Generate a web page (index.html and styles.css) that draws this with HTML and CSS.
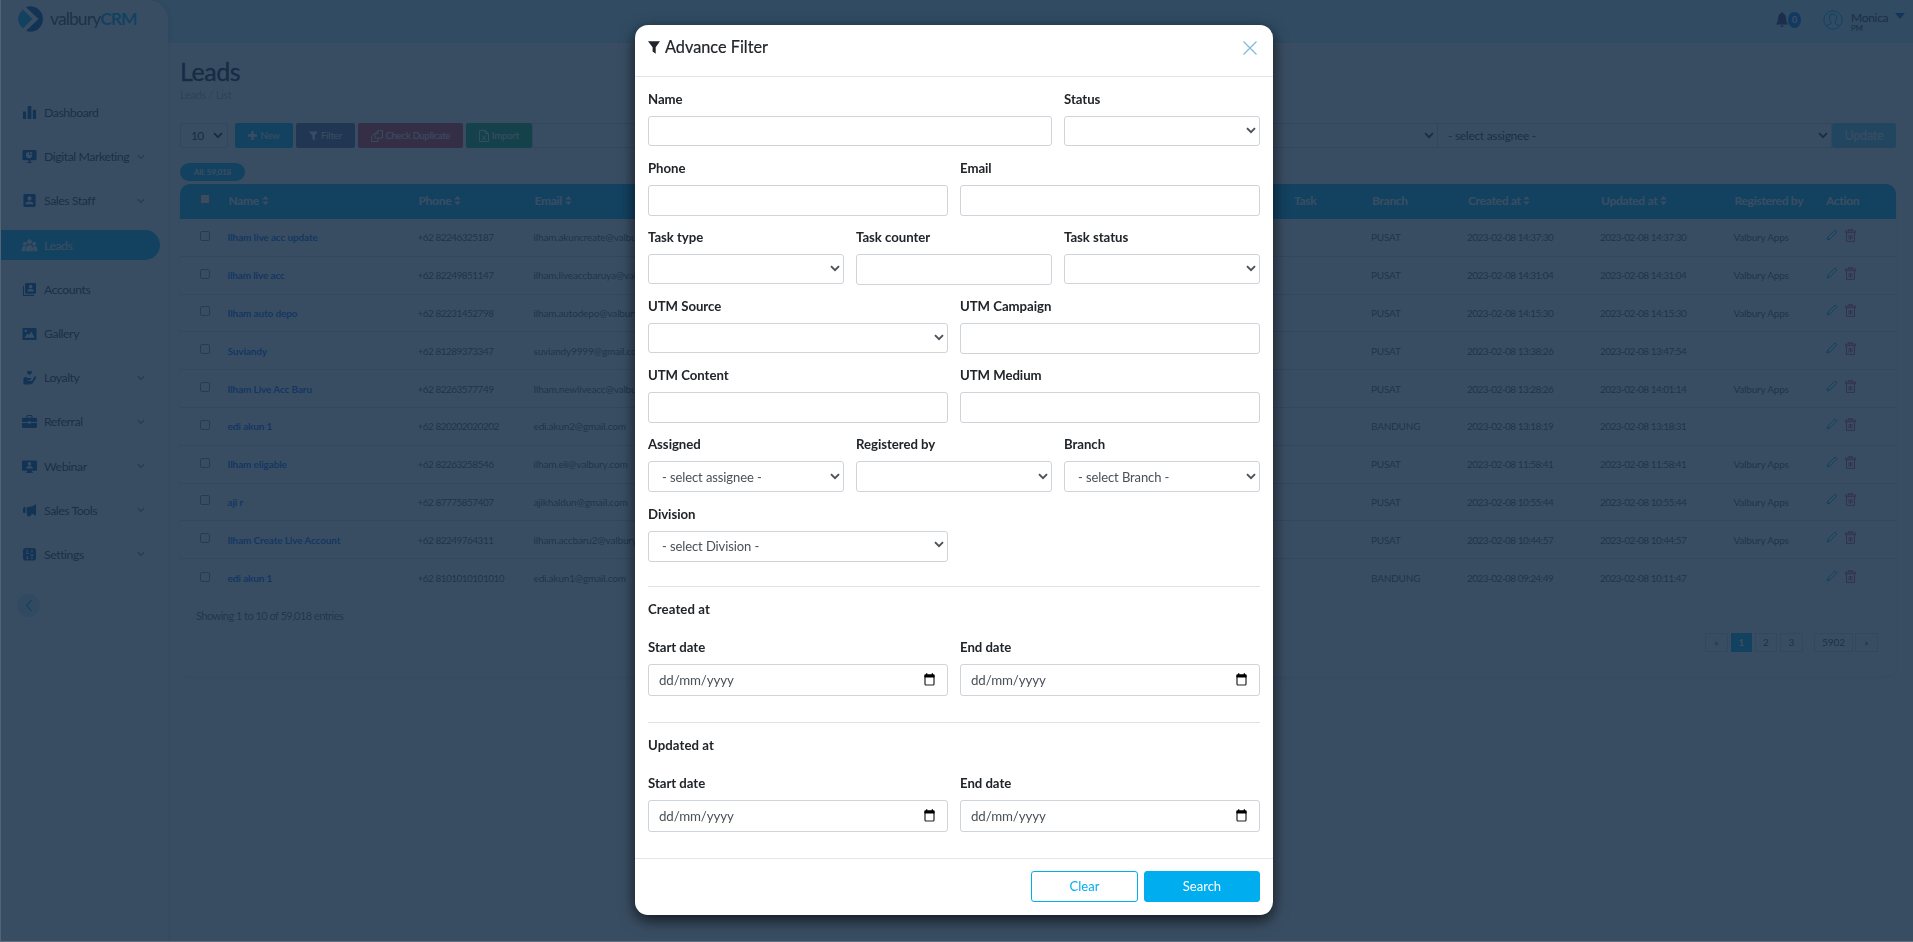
FILE: index.html
```
<!DOCTYPE html>
<html lang="en">
<head>
<meta charset="utf-8">
<title>Leads - valburyCRM</title>
<link rel="stylesheet" href="styles.css">
</head>
<body>
<svg class="sprite" xmlns="http://www.w3.org/2000/svg">
  <symbol id="chev" viewBox="0 0 10 7"><path d="M1 1.2 5 5.2 9 1.2" fill="none" stroke="currentColor" stroke-width="1.9"/></symbol>
  <symbol id="funnel" viewBox="0 0 12 13"><path d="M0 .3h12L7.700 6.200V12.700L4.600 10.600V6.200z" fill="currentColor"/></symbol>
  <symbol id="sort" viewBox="0 0 7 10"><path d="M3.500 0 7 4H0zM3.500 10 0 6h7z" fill="currentColor"/></symbol>
  <symbol id="pencil" viewBox="0 0 12 12"><path d="M1 11 1.800 8.200 9 1 11 2.800 3.800 10.200zM1.800 8.200 3.800 10.200" fill="none" stroke="#00aeef" stroke-width="1"/></symbol>
  <symbol id="trash" viewBox="0 0 11 13"><path d="M3.500 2V.7h4V2M.5 2h10v1.700H.500zM1.500 4v8.400h8V4M4 6v4.500M5.500 6v4.500M7 6v4.500" fill="none" stroke="#c83560" stroke-width=".9"/></symbol>
  <symbol id="cal" viewBox="0 0 11 13"><path d="M1 3.200h9V11a1 1 0 0 1-1 1H2a1 1 0 0 1-1-1z" fill="none" stroke="#222" stroke-width="1.200"/><path d="M.4 4.600V2.200q0-.9.9-.9H2V.2h1.300v1.100h4.400V.2H9v1.100h.7q.9 0 .9.900v2.400z" fill="#000"/></symbol>
</svg>

<div class="app">
  <aside class="sidebar">
    <div class="brand">
      <svg width="25" height="26" viewBox="0 0 25 26"><path d="M5 3.500 14.500 13 5 22.500Q0 18 0 13T5 3.500z" fill="#00aeef"/><path d="M8 1.300Q10 .3 12.500.3A12.500 12.700 0 0 1 12.500 25.700Q10 25.700 8 24.700L20.500 13z" fill="#0054a6"/></svg>
      <span class="brand-name">valbury<b>CRM</b></span>
    </div>
    <nav class="menu">
      <a><svg class="ic" viewBox="0 0 16 16"><path d="M1 7h3.500v8H1zM6 1h4v14H6zM11.500 5H15v10h-3.500z"/></svg>Dashboard</a>
      <a><svg class="ic" viewBox="0 0 16 16"><path fill-rule="evenodd" d="M1.500 1h13q1 0 1 1v9q0 1-1 1H9v2h2v1H5v-1h2v-2H1.500q-1 0-1-1V2q0-1 1-1zM7.500 3.200a3.300 3.300 0 1 0 3.300 3.300H7.500zM8.500 2.800v2.800h2.800a3 3 0 0 0-2.800-2.800z"/></svg>Digital Marketing<svg class="arr"><use href="#chev"/></svg></a>
      <a><svg class="ic" viewBox="0 0 16 16"><path fill-rule="evenodd" d="M3 1h10q1.500 0 1.500 1.500v11q0 1.500-1.500 1.500H3q-1.500 0-1.500-1.500v-11Q1.500 1 3 1zM8 3.500a2.200 2.200 0 1 0 .01 0zM3.800 12h8.400q0-3-4.200-3t-4.200 3z"/></svg>Sales Staff<svg class="arr"><use href="#chev"/></svg></a>
      <a class="on"><svg class="ic" viewBox="0 0 16 16"><circle cx="8" cy="4" r="2.600"/><circle cx="3" cy="6" r="2"/><circle cx="13" cy="6" r="2"/><path d="M4 14q0-6.500 4-6.500t4 6.500zM-.5 14q0-5.500 3.300-5.500L4 9.500 3.300 14zM16.500 14q0-5.500-3.300-5.500L12 9.500l.7 4.500z"/></svg>Leads</a>
      <a><svg class="ic" viewBox="0 0 16 16"><path fill-rule="evenodd" d="M4.500 1h9.300q1.200 0 1.200 1.200v9q0 1.200-1.200 1.200H4.500q-1.200 0-1.200-1.200v-9Q3.300 1 4.500 1zM9.200 3a1.900 1.900 0 1 0 .01 0zM5.800 10h6.800q0-2.500-3.400-2.500T5.800 10z"/><path d="M1 4h1.200v9.500H13V15H2.200Q1 15 1 13.800z"/></svg>Accounts</a>
      <a><svg class="ic" viewBox="0 0 16 16"><path fill-rule="evenodd" d="M1.500 2h13q1 0 1 1v11q0 1-1 1h-13q-1 0-1-1V3q0-1 1-1zM2.500 12.500h11L10 6 7.500 9.500 6 8zM4 4a1.300 1.300 0 1 0 .01 0z"/></svg>Gallery</a>
      <a><svg class="ic" viewBox="0 0 16 16"><path d="M8 5.500Q5 3.500 5.300 1.800 6.500-.2 8 1.500 9.500-.2 10.700 1.800 11 3.500 8 5.500zM1.500 8.500Q4 6.500 6 8.500h4L9 11H6v.8h4.500l3-5Q15.500 6 15 8.500L11.500 14 9 15.500H1.500z"/></svg>Loyalty<svg class="arr"><use href="#chev"/></svg></a>
      <a><svg class="ic" viewBox="0 0 16 16"><path fill-rule="evenodd" d="M4.800 4V2q0-1 1-1h4.400q1 0 1 1v2h3.300Q16 4 16 5.500V8.500H9.200V7.500H6.800v1H0v-3Q0 4 1.500 4zM6 4h4V2.200H6z"/><path d="M0 9.500h6.800v1h2.400v-1H16v4q0 1.500-1.500 1.500h-13Q0 15 0 13.500z"/></svg>Referral<svg class="arr"><use href="#chev"/></svg></a>
      <a><svg class="ic" viewBox="0 0 16 16"><path fill-rule="evenodd" d="M1 1.500h14q1 0 1 1v9q0 1-1 1h-4.500v1.300h1V15h-7v-1.200h1v-1.300H1q-1 0-1-1v-9q0-1 1-1zM8 3.300a1.800 1.800 0 1 0 .01 0zM4.500 10.200h7Q11.500 7.500 8 7.500t-3.500 2.700z"/></svg>Webinar<svg class="arr"><use href="#chev"/></svg></a>
      <a><svg class="ic" viewBox="0 0 16 16"><path d="M15 1v12.500L10.500 11.500Q9 16 5.500 13.500L5 11V4.500L11 3.500zM1 5.500Q2.500 4 3.800 4.500v6Q2.500 11 1 10z"/></svg>Sales Tools<svg class="arr"><use href="#chev"/></svg></a>
      <a><svg class="ic" viewBox="0 0 16 16"><path fill-rule="evenodd" d="M4 1h8q3 0 3 3v7.500q0 3-3 3H4q-3 0-3-3V4q0-3 3-3zM5 3h1.200v2H5zM4 6h3.300v1.200H4zM5 9.500h1.200V13H5zM10 3h1.200v3H10zM9 8h3.300v1.200H9zM10 10.500h1.200V13H10z"/></svg>Settings<svg class="arr"><use href="#chev"/></svg></a>
    </nav>
    <div class="collapse"><svg width="8" height="13" viewBox="0 0 8 13"><path d="M6.500 1 1.500 6.500l5 5.500" fill="none" stroke="#00aeef" stroke-width="1.200"/></svg></div>
  </aside>

  <div class="content">
    <header class="topbar">
      <svg class="bell" viewBox="0 0 12 16"><path d="M6 0q.9 0 1 1.200Q10 2.300 10 6.500 10 10 12 12.500H0Q2 10 2 6.500 2 2.300 5 1.200 5.100 0 6 0zM4.500 13.500h3Q7.300 15.300 6 15.300T4.500 13.500z" fill="#3c2f5c"/></svg>
      <span class="count">0</span>
      <svg class="avatar" viewBox="0 0 20 20"><circle cx="10" cy="10" r="9.200"/><path d="M4 16.500q0-2 3-2.500 1.800-.3 1-2Q6.300 10 6.300 7q0-3 3.700-3t3.700 3q0 3-1.700 5-.8 1.700 1 2 3 .5 3 2.500"/></svg>
      <div class="user"><span>Monica</span><small>PM</small></div>
      <svg class="caret" viewBox="0 0 10 6"><path d="M0 0h10L5 6z" fill="#0060c0"/></svg>
    </header>

    <main class="page">
      <h1>Leads</h1>
      <div class="crumb">Leads / List</div>
      <div class="toolbar">
        <div class="size">10<svg width="10" height="7"><use href="#chev"/></svg></div>
        <div class="btn b-new"><svg width="9" height="9" viewBox="0 0 9 9"><path d="M4.500 0v9M0 4.500h9" stroke="#fff" stroke-width="2.400"/></svg>New</div>
        <div class="btn b-filter"><svg width="9" height="10" viewBox="0 0 12 13"><use href="#funnel" width="12" height="13"/></svg>Filter</div>
        <div class="btn b-dup"><svg width="12" height="12" viewBox="0 0 12 12"><path d="M4 3.500 7 .6h4.500V8H4zM4 3.500h3v-3M4 4H3L.6 6V11.500H7V8" fill="none" stroke="#fff" stroke-width=".9"/></svg>Check Duplicate</div>
        <div class="btn b-imp"><svg width="10" height="12" viewBox="0 0 10 12"><path d="M.5.500h6L9.500 3.500v8h-9zM6.500.500v3h3M3 5.500l4 4.500M7 5.500 3 10" fill="none" stroke="#fff" stroke-width=".9"/></svg>Import</div>
        <div class="sel s1"><svg width="10" height="7"><use href="#chev"/></svg></div>
        <div class="sel s2"><span>- select assignee -</span><svg width="10" height="7"><use href="#chev"/></svg></div>
        <div class="btn b-upd">Update</div>
      </div>
      <span class="pill">All: 59,018</span>

      <section class="card">
        <div class="tr th"><i class="cb full"></i><b>Name <svg class="so"><use href="#sort"/></svg></b><b>Phone <svg class="so"><use href="#sort"/></svg></b><b>Email <svg class="so"><use href="#sort"/></svg></b><b>Task</b><b>Branch</b><b>Created at <svg class="so"><use href="#sort"/></svg></b><b>Updated at <svg class="so"><use href="#sort"/></svg></b><b>Registered by</b><b>Action</b></div>
        <div class="tr"><i class="cb"></i><a>Ilham live acc update</a><span class="d">+62 82246325187</span><span class="em">ilham.akuncreate@valbury.com</span><span></span><span>PUSAT</span><span class="d">2023-02-08 14:37:30</span><span class="d">2023-02-08 14:37:30</span><span>Valbury Apps</span><span class="act"><svg class="pe"><use href="#pencil"/></svg><svg class="ta"><use href="#trash"/></svg></span></div>
        <div class="tr"><i class="cb"></i><a>ilham live acc</a><span class="d">+62 82249851147</span><span class="em">ilham.liveaccbaruya@valbury.com</span><span></span><span>PUSAT</span><span class="d">2023-02-08 14:31:04</span><span class="d">2023-02-08 14:31:04</span><span>Valbury Apps</span><span class="act"><svg class="pe"><use href="#pencil"/></svg><svg class="ta"><use href="#trash"/></svg></span></div>
        <div class="tr"><i class="cb"></i><a>Ilham auto depo</a><span class="d">+62 82231452798</span><span class="em">ilham.autodepo@valbury.com</span><span></span><span>PUSAT</span><span class="d">2023-02-08 14:15:30</span><span class="d">2023-02-08 14:15:30</span><span>Valbury Apps</span><span class="act"><svg class="pe"><use href="#pencil"/></svg><svg class="ta"><use href="#trash"/></svg></span></div>
        <div class="tr"><i class="cb"></i><a>Suviandy</a><span class="d">+62 81289373347</span><span class="em">suviandy9999@gmail.com</span><span></span><span>PUSAT</span><span class="d">2023-02-08 13:38:26</span><span class="d">2023-02-08 13:47:54</span><span></span><span class="act"><svg class="pe"><use href="#pencil"/></svg><svg class="ta"><use href="#trash"/></svg></span></div>
        <div class="tr"><i class="cb"></i><a>Ilham Live Acc Baru</a><span class="d">+62 82263577749</span><span class="em">Ilham.newliveacc@valbury.com</span><span></span><span>PUSAT</span><span class="d">2023-02-08 13:28:26</span><span class="d">2023-02-08 14:01:14</span><span>Valbury Apps</span><span class="act"><svg class="pe"><use href="#pencil"/></svg><svg class="ta"><use href="#trash"/></svg></span></div>
        <div class="tr"><i class="cb"></i><a>edi akun 1</a><span class="d">+62 820202020202</span><span class="em">edi.akun2@gmail.com</span><span></span><span>BANDUNG</span><span class="d">2023-02-08 13:18:19</span><span class="d">2023-02-08 13:18:31</span><span></span><span class="act"><svg class="pe"><use href="#pencil"/></svg><svg class="ta"><use href="#trash"/></svg></span></div>
        <div class="tr"><i class="cb"></i><a>Ilham eligable</a><span class="d">+62 82263258546</span><span class="em">ilham.eli@valbury.com</span><span></span><span>PUSAT</span><span class="d">2023-02-08 11:58:41</span><span class="d">2023-02-08 11:58:41</span><span>Valbury Apps</span><span class="act"><svg class="pe"><use href="#pencil"/></svg><svg class="ta"><use href="#trash"/></svg></span></div>
        <div class="tr"><i class="cb"></i><a>aji r</a><span class="d">+62 87775857407</span><span class="em">ajikhaldun@gmail.com</span><span></span><span>PUSAT</span><span class="d">2023-02-08 10:55:44</span><span class="d">2023-02-08 10:55:44</span><span>Valbury Apps</span><span class="act"><svg class="pe"><use href="#pencil"/></svg><svg class="ta"><use href="#trash"/></svg></span></div>
        <div class="tr"><i class="cb"></i><a>Ilham Create Live Account</a><span class="d">+62 82249764311</span><span class="em">ilham.accbaru2@valbury.com</span><span></span><span>PUSAT</span><span class="d">2023-02-08 10:44:57</span><span class="d">2023-02-08 10:44:57</span><span>Valbury Apps</span><span class="act"><svg class="pe"><use href="#pencil"/></svg><svg class="ta"><use href="#trash"/></svg></span></div>
        <div class="tr last"><i class="cb"></i><a>edi akun 1</a><span class="d">+62 8101010101010</span><span class="em">edi.akun1@gmail.com</span><span></span><span>BANDUNG</span><span class="d">2023-02-08 09:24:49</span><span class="d">2023-02-08 10:11:47</span><span></span><span class="act"><svg class="pe"><use href="#pencil"/></svg><svg class="ta"><use href="#trash"/></svg></span></div>
        <div class="showing">Showing 1 to 10 of 59,018 entries</div>
        <div class="pager"><span class="w23">«</span><span class="w21 cur">1</span><span class="w22">2</span><span class="w23">3</span><span class="w39">5902</span><span class="w23 near">»</span></div>
      </section>
    </main>
  </div>
</div>

<div class="backdrop">
  <form class="modal">
    <div class="m-head"><svg width="12" height="13"><use href="#funnel"/></svg><h2>Advance Filter</h2><svg class="close" width="14" height="14" viewBox="0 0 14 14"><path d="M.5.500l13 13M13.500.500l-13 13" stroke="#7db9dc" stroke-width="1.200"/></svg></div>
    <div class="m-body">
      <div class="row">
        <label class="c8">Name<span class="in short"></span></label>
        <label class="c4">Status<span class="in short"><svg class="cv"><use href="#chev"/></svg></span></label>
        <label class="c6">Phone<span class="in"></span></label>
        <label class="c6">Email<span class="in"></span></label>
        <label class="c4">Task type<span class="in short"><svg class="cv"><use href="#chev"/></svg></span></label>
        <label class="c4">Task counter<span class="in"></span></label>
        <label class="c4">Task status<span class="in short"><svg class="cv"><use href="#chev"/></svg></span></label>
        <label class="c6">UTM Source<span class="in short"><svg class="cv"><use href="#chev"/></svg></span></label>
        <label class="c6">UTM Campaign<span class="in"></span></label>
        <label class="c6">UTM Content<span class="in"></span></label>
        <label class="c6">UTM Medium<span class="in"></span></label>
        <label class="c4">Assigned<span class="in">- select assignee -<svg class="cv"><use href="#chev"/></svg></span></label>
        <label class="c4">Registered by<span class="in"><svg class="cv"><use href="#chev"/></svg></span></label>
        <label class="c4">Branch<span class="in">- select Branch -<svg class="cv"><use href="#chev"/></svg></span></label>
        <label class="c6">Division<span class="in div">- select Division -<svg class="cv"><use href="#chev"/></svg></span></label>
      </div>
      <fieldset>
        <h3>Created at</h3>
        <div class="row">
          <label class="c6">Start date<span class="in date">dd/mm/yyyy<svg class="ca"><use href="#cal"/></svg></span></label>
          <label class="c6">End date<span class="in date">dd/mm/yyyy<svg class="ca"><use href="#cal"/></svg></span></label>
        </div>
      </fieldset>
      <fieldset>
        <h3>Updated at</h3>
        <div class="row">
          <label class="c6">Start date<span class="in date">dd/mm/yyyy<svg class="ca"><use href="#cal"/></svg></span></label>
          <label class="c6">End date<span class="in date">dd/mm/yyyy<svg class="ca"><use href="#cal"/></svg></span></label>
        </div>
      </fieldset>
    </div>
    <div class="m-foot"><span class="mb clear">Clear</span><span class="mb search">Search</span></div>
  </form>
</div>
</body>
</html>
```
FILE: styles.css
```
* { box-sizing: border-box; }
body { margin: 0; height: 942px; overflow: hidden; background: #fff; font-family: Lato, "Open Sans", sans-serif; color: #212529; }
.sprite { position: absolute; width: 0; height: 0; }
svg { flex: none; }

.app { display: flex; height: 942px; background: #c3f0fb; }
.sidebar { position: relative; flex: none; width: 168px; height: 942px; background: #fff; border-top-right-radius: 20px; box-shadow: 2px 0 5px rgba(30, 50, 150, .15); }
.brand { display: flex; align-items: center; gap: 7px; padding: 6px 0 0 18px; height: 32px; }
.brand-name { font-size: 17.500px; letter-spacing: -.9px; color: #444; line-height: 26px; }
.brand-name b { color: #00aeef; letter-spacing: -1.100px; }
.menu { display: flex; flex-direction: column; gap: 14.200px; padding-top: 65.500px; }
.menu a { display: flex; align-items: center; gap: 6px; height: 30px; width: 160px; padding-left: 21px; font-size: 12.300px; letter-spacing: -.45px; color: #33364a; white-space: nowrap; }
.menu a.on { background: #00aeef; color: #fff; border-radius: 0 15px 15px 0; }
.ic { width: 17px; height: 15px; fill: #0054a6; }
.on .ic { fill: #fff; overflow: visible; }
.arr { width: 8px; height: 6px; margin-left: auto; margin-right: 15px; color: #8499ad; }
.collapse { display: flex; align-items: center; justify-content: center; width: 23px; height: 23px; border-radius: 50%; background: #c6ecfb; margin: 24.500px 0 0 17px; }

.content { flex: 1; min-width: 0; }
.topbar { height: 43px; display: flex; align-items: center; justify-content: flex-end; padding: 0 8px 4px 0; }
.bell { width: 12px; height: 16px; }
.count { width: 13px; height: 16px; border-radius: 50%; background: #007bff; color: #fff; font-size: 9px; font-weight: 700; line-height: 16px; text-align: center; margin-right: 22px; }
.avatar { width: 20px; height: 20px; fill: none; stroke: #00aeef; stroke-width: 1; margin-right: 8px; }
.user { display: flex; flex-direction: column; width: 44px; font-size: 12px; line-height: 12px; padding-top: 5px; color: #33364a; letter-spacing: -.3px; }
.user small { font-size: 8px; line-height: 9px; letter-spacing: -.3px; }
.caret { width: 10px; height: 6px; margin-bottom: 7px; }

.page { height: 899px; background: #fff; padding: 14px 17px 0 12px; }
h1 { margin: 0; font-size: 25px; line-height: 28px; font-weight: 400; -webkit-text-stroke: .4px; letter-spacing: -.45px; color: #1f1f3a; }
.crumb { font-size: 11px; line-height: 16px; letter-spacing: -.3px; color: #a5aebc; margin: 2px 0 20px 0; }
.toolbar { display: flex; height: 25px; }
.size { display: flex; align-items: center; justify-content: space-between; width: 48px; padding: 0 4px 0 10px; border: 1px solid #ced4ea; border-radius: 2px; font-size: 12px; letter-spacing: -.7px; color: #222; margin-right: 7px; }
.btn { display: flex; align-items: center; justify-content: center; gap: 3px; border-radius: 2px; color: #fff; font-size: 9.500px; letter-spacing: -.1px; }
.b-new { width: 58px; background: #00aeef; margin-right: 3px; }
.b-filter { width: 59px; background: #5c6496; margin-right: 3px; }
.b-dup { width: 105px; background: #e0304c; margin-right: 3px; letter-spacing: -.25px; }
.b-imp { width: 66px; background: #10b060; }
.b-upd { width: 64px; background: #66ceef; font-size: 12.500px; letter-spacing: -.2px; }
.sel { display: flex; align-items: center; justify-content: space-between; border: 1px solid #ced4ea; font-size: 12px; letter-spacing: -.3px; padding: 0 3px 0 10px; color: #333; }
.s1 { flex: 1; justify-content: flex-end; }
.s2 { width: 394px; border-left: 0; }
.pill { display: block; width: 65px; height: 18px; line-height: 18px; margin-top: 15px; border-radius: 9px; background: #00aeef; color: #fff; font-size: 8.300px; font-weight: 700; text-align: center; letter-spacing: -.25px; }

.card { height: 492px; margin-top: 3px; border-radius: 10px; background: #fff; box-shadow: 0 2px 8px rgba(40, 60, 160, .18); }
.tr { display: grid; grid-template-columns: 47.500px 190px 116px 759.500px 78px 96px 133px 133.500px 91.500px 1fr; align-items: center; height: 37.800px; border-bottom: 1px solid #ccd6f0; font-size: 10px; letter-spacing: -.2px; color: #4c5668; }
.tr.last { border-bottom: 0; }
.tr a { color: #006cff; font-weight: 700; letter-spacing: -.13px; }
.tr .d { letter-spacing: -.52px; }
.tr .em { white-space: nowrap; letter-spacing: -.15px; }
.th { height: 35px; background: #00aeef; border: 0; border-radius: 10px 10px 0 0; color: #fff; font-size: 12px; letter-spacing: -.3px; padding-bottom: 2px; }
.th b { padding-left: 1px; white-space: pre; }
.so { width: 7px; height: 9px; }
.cb { width: 10px; height: 10px; border: 1px solid #888; border-radius: 2px; margin: -3px 0 0 20px; }
.cb.full { background: #fff; }
.act { display: flex; gap: 7px; padding-left: 1px; margin-top: -4px; }
.pe { width: 12px; height: 12px; }
.ta { width: 11px; height: 13px; }
.showing { font-size: 11px; line-height: 16px; letter-spacing: -.53px; color: #5c6678; padding: 11px 0 0 16px; }
.pager { display: flex; justify-content: flex-end; padding: 9px 18px 0 0; font-size: 10px; color: #444; }
.pager span { height: 19px; line-height: 17px; text-align: center; border: 1px solid #ccd6f0; margin-left: 3px; }
.pager .w23 { width: 23px; }
.pager .w21 { width: 21px; }
.pager .w22 { width: 22px; }
.pager .w39 { width: 39px; margin-left: 11px; }
.pager .near { margin-left: 2px; }
.pager .cur { background: #00aeef; border-color: #00aeef; color: #fff; font-weight: 700; }

.backdrop { position: fixed; inset: 0; background: rgba(22, 46, 70, .85); border-left: 1px solid #50657a; border-bottom: 1px solid #5f6f80; padding: 25px 0 0 634px; }
.modal { width: 638px; height: 890px; background: #fff; border-radius: 13px; box-shadow: 0 5px 15px rgba(0, 0, 0, .7); }
.m-head { display: flex; height: 52px; border-bottom: 1px solid #e3e5e8; padding: 16px 16px 0 13px; }
h2 { flex: 1; margin: -6px 0 0 5px; font-size: 16.300px; line-height: 24px; font-weight: 400; -webkit-text-stroke: .2px; letter-spacing: 0; }
.m-body { height: 781px; padding: 12px 13px 0; }
.row { display: grid; grid-template-columns: repeat(12, 1fr); column-gap: 12px; }
.c4 { grid-column: span 4; }
.c6 { grid-column: span 6; }
.c8 { grid-column: span 8; }
label { display: block; height: 69.100px; font-size: 13.200px; font-weight: 700; line-height: 20px; letter-spacing: -.04px; }
.in { display: flex; align-items: center; justify-content: space-between; height: 31px; margin-top: 7px; border: 1px solid #ced4da; border-radius: 3px; padding: 1px 3px 0 13px; font-size: 13px; font-weight: 400; letter-spacing: -.1px; color: #495057; }
.in.short { height: 30px; }
.in.div { padding: 0 3px 1px 13px; }
.cv { width: 10px; height: 7px; margin-left: auto; margin-bottom: 2px; }
.in.date { height: 32px; padding: 0 12px 0 10px; font-size: 13.300px; letter-spacing: -.12px; }
.ca { width: 11px; height: 13px; }
fieldset { margin: 0; padding: 12px 0 0; border: 0; border-top: 1px solid #dfe2e5; height: 136.300px; }
.row + fieldset { margin-top: 13px; }
h3 { margin: 0 0 18px; font-size: 13.200px; line-height: 20px; font-weight: 700; letter-spacing: .08px; }
.m-foot { display: flex; justify-content: flex-end; gap: 6px; border-top: 1px solid #e3e5e8; padding: 12px 13px; }
.mb { height: 31px; border: 1px solid #00aeef; border-radius: 3px; line-height: 29px; text-align: center; font-size: 13px; color: #00aeef; }
.clear { width: 107px; }
.search { width: 116px; background: #00aeef; color: #fff; }
```
